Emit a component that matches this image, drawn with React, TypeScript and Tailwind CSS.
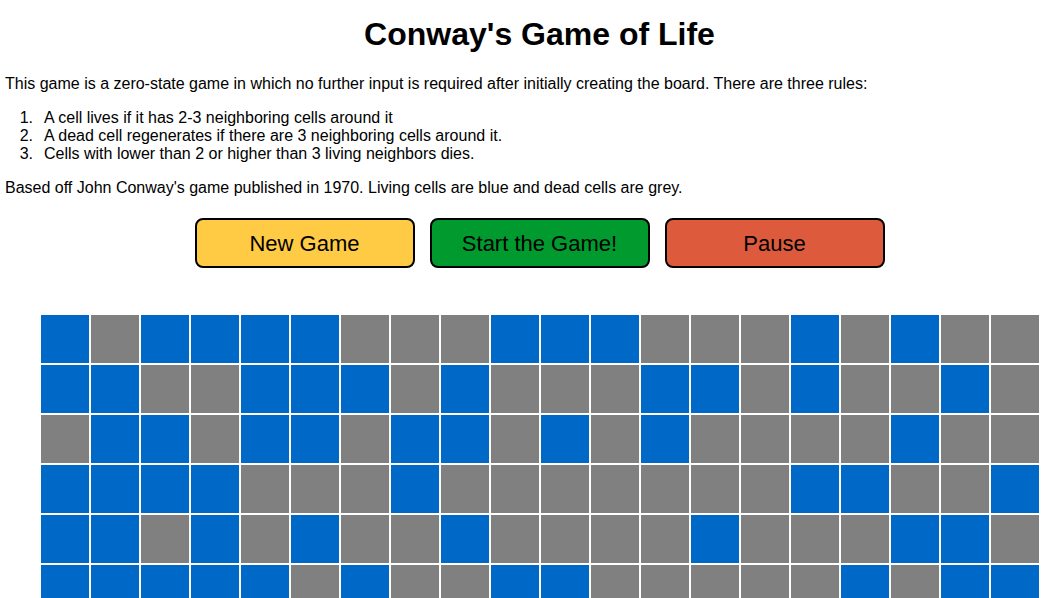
const BOARD = [
  "10111100011100010100",
  "11001110100011010010",
  "01101101101010000100",
  "11110001000000011001",
  "11010100100001000110",
  "11111010011000001011",
];

const RULES = [
  "A cell lives if it has 2-3 neighboring cells around it",
  "A dead cell regenerates if there are 3 neighboring cells around it.",
  "Cells with lower than 2 or higher than 3 living neighbors dies.",
];

function Cell({ alive }: { alive: boolean }) {
  return (
    <div
      className={`w-[50px] h-[50px] border border-white ${alive ? "bg-[#0069c8]" : "bg-[#808080]"}`}
    />
  );
}

export default function App() {
  return (
    <div className="bg-white text-black font-['Liberation_Sans',Arial,sans-serif] min-h-[598px]">
      <div className="pl-[20px] pt-[16px]">
        <h1 className="text-center text-[32px] font-bold leading-[36px]">
          Conway's Game of Life
        </h1>
      </div>

      <div className="px-[5px] text-[16px] leading-[18px] mt-[23px]">
        <p>
          This game is a zero-state game in which no further input is required after initially
          creating the board. There are three rules:
        </p>
        <ol className="mt-[16px]">
          {RULES.map((rule, i) => (
            <li key={i} className="flex">
              <span className="w-[30px] text-right pr-[2px]">{i + 1}.</span>
              <span className="pl-[9px]">{rule}</span>
            </li>
          ))}
        </ol>
        <p className="mt-[16px]">
          Based off John Conway's game published in 1970. Living cells are blue and dead cells are
          grey.
        </p>
      </div>

      <div className="pl-[20px] mt-[21px] flex justify-center gap-[15px]">
        <button className="w-[220px] h-[50px] bg-[#ffcb45] border-2 border-black rounded-[8px] text-[22px]">
          New Game
        </button>
        <button className="w-[220px] h-[50px] bg-[#009a2e] border-2 border-black rounded-[8px] text-[22px]">
          Start the Game!
        </button>
        <button className="w-[220px] h-[50px] bg-[#dd5a3d] border-2 border-black rounded-[8px] text-[22px]">
          Pause
        </button>
      </div>

      <div className="ml-[40px] mt-[46px] w-[1000px]">
        {BOARD.map((row, r) => (
          <div key={r} className="flex">
            {row.split("").map((c, i) => (
              <Cell key={i} alive={c === "1"} />
            ))}
          </div>
        ))}
      </div>
    </div>
  );
}
